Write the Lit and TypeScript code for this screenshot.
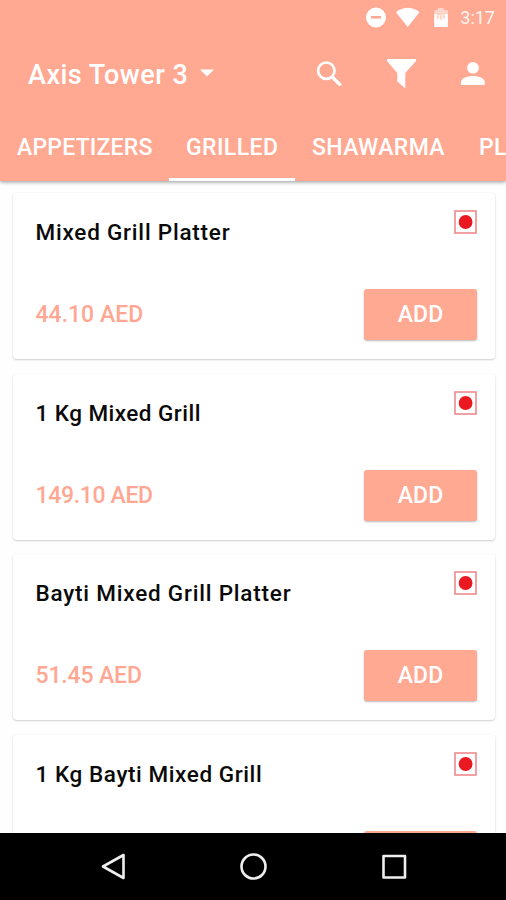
import { LitElement, html, css, svg } from "lit";
import { customElement, property } from "lit/decorators.js";

interface Dish {
  name: string;
  price: string;
  nameSpacing: number;
  priceSpacing: number;
}

const dishes: Dish[] = [
  { name: "Mixed Grill Platter", price: "44.10 AED", nameSpacing: 0.78, priceSpacing: 0 },
  { name: "1 Kg Mixed Grill", price: "149.10 AED", nameSpacing: 0.46, priceSpacing: -0.35 },
  { name: "Bayti Mixed Grill Platter", price: "51.45 AED", nameSpacing: 0.79, priceSpacing: -0.15 },
  { name: "1 Kg Bayti Mixed Grill", price: "51.45 AED", nameSpacing: 0.58, priceSpacing: -0.15 },
];

@customElement("dish-card")
export class DishCard extends LitElement {
  @property({ attribute: false }) dish!: Dish;

  static styles = css`
    :host {
      display: flex;
      flex-direction: column;
      justify-content: space-between;
      box-sizing: border-box;
      height: 166px;
      flex: none;
      padding: 17px 18px 19px 22.5px;
      border-radius: 4px;
      background: #fff;
      box-shadow: 0 1px 2px rgba(0, 0, 0, 0.18), 0 0 2px rgba(0, 0, 0, 0.05);
    }
    .row {
      display: flex;
      justify-content: space-between;
    }
    .name {
      color: #0a0a0a;
      font-size: 22.5px;
      font-weight: 500;
      line-height: 26px;
      margin-top: 9px;
      white-space: nowrap;
    }
    .price {
      color: #ffa792;
      font-size: 23px;
      font-weight: 500;
      line-height: 51px;
      white-space: nowrap;
    }
    .badge {
      width: 23px;
      height: 24px;
    }
    .add {
      width: 113px;
      height: 51px;
      padding: 0;
      border: 0;
      border-radius: 3px;
      background: #ffa892;
      color: #fff;
      font: 500 23px/51px Roboto, "Liberation Sans", sans-serif;
      box-shadow: 0 1px 2px rgba(0, 0, 0, 0.28);
    }
  `;

  render() {
    const { name, price, nameSpacing, priceSpacing } = this.dish;
    return html`
      <div class="row">
        <div class="name" style="letter-spacing:${nameSpacing}px">${name}</div>
        <svg class="badge" viewBox="0 0 23 24">
          <rect x="1" y="1" width="21" height="22" fill="#fff" stroke="#ee8a8c" stroke-width="1.6" />
          <circle cx="11.6" cy="12" r="6.9" fill="#ea1820" />
        </svg>
      </div>
      <div class="row">
        <div class="price" style="letter-spacing:${priceSpacing}px">${price}</div>
        <button class="add">ADD</button>
      </div>
    `;
  }
}

@customElement("app-root")
export class AppRoot extends LitElement {
  static styles = css`
    :host {
      display: flex;
      flex-direction: column;
      width: 506px;
      height: 900px;
      overflow: hidden;
      background: #fefefe;
      color: #fff;
      font-family: Roboto, "Liberation Sans", sans-serif;
    }
    .header {
      flex: none;
      height: 181px;
      background: #ffa892;
      box-shadow: 0 1px 4px rgba(0, 0, 0, 0.42);
      z-index: 1;
      display: flex;
      flex-direction: column;
    }
    .status {
      height: 35px;
      display: flex;
      align-items: center;
      justify-content: flex-end;
      padding-right: 11px;
    }
    .status svg {
      width: 96px;
      height: 35px;
    }
    .clock {
      font-size: 18px;
      line-height: 36px;
      color: #fff4f0;
    }
    .toolbar {
      height: 78px;
      display: flex;
      align-items: center;
      padding-left: 28px;
    }
    .place {
      font-size: 27px;
      font-weight: 500;
      line-height: 78px;
      padding-top: 2px;
      letter-spacing: 0.5px;
      white-space: nowrap;
    }
    .caret {
      width: 14px;
      height: 8px;
      margin: -2px 0 0 12px;
    }
    .actions {
      width: 190px;
      height: 40px;
      margin-left: auto;
      flex: none;
    }
    .tabs {
      height: 68px;
      display: flex;
      overflow: hidden;
    }
    .tab {
      flex: none;
      box-sizing: border-box;
      height: 68px;
      padding: 1px 0 0 17px;
      font-size: 23px;
      font-weight: 500;
      letter-spacing: 0.2px;
      line-height: 68px;
      border-bottom: 3px solid transparent;
      white-space: nowrap;
    }
    .appetizers { width: 169px; }
    .grilled { width: 126px; border-bottom-color: #fff; letter-spacing: 0.4px; }
    .shawarma { width: 167px; letter-spacing: 0.35px; }
    .list {
      flex: 1;
      min-height: 0;
      overflow: hidden;
      padding: 12px 11px 0 13px;
      display: flex;
      flex-direction: column;
      gap: 14.7px;
    }
    .nav {
      flex: none;
      height: 67px;
      background: #000;
    }
    .nav svg {
      display: block;
      width: 506px;
      height: 67px;
    }
  `;

  private statusIcons() {
    return svg`
      <circle cx="12" cy="17.500" r="10" fill="#fff" />
      <rect x="7" y="16" width="10" height="2.600" fill="#ffa892" />
      <path d="M32 12.200C39 6.200 48.500 6.200 55.500 12.200L43.700 27Z" fill="#fff" />
      <path d="M70.300 10h3.500V8h6v2h4V27h-13.500Z" fill="#fff" fill-opacity=".5" />
      <path d="M70.300 14h2.500v5h2v-4h1v5h2v-5h1v4h2v-5h3V27h-13.500Z" fill="#fff" />
    `;
  }

  render() {
    return html`
      <div class="header">
        <div class="status">
          <svg viewBox="0 0 96 35">${this.statusIcons()}</svg>
          <span class="clock">3:17</span>
        </div>
        <div class="toolbar">
          <div class="place">Axis Tower 3</div>
          <svg class="caret" viewBox="0 0 14 8"><path d="M0 .5h14L7 7.500Z" fill="#fff" /></svg>
          <svg class="actions" viewBox="316 54 190 40">
            <circle cx="326.300" cy="70.700" r="8.200" fill="none" stroke="#fff" stroke-width="2.700" />
            <path d="M332 76.700L340.700 85.400" stroke="#fff" stroke-width="3.400" />
            <path d="M387 59h29v2L405.300 73V88.500L397.300 81.500V73L387 61Z" fill="#fff" />
            <circle cx="473" cy="67.800" r="5.900" fill="#fff" />
            <path d="M461 85V82C461 78 468 76 473 76S484.700 78 484.700 82V85Z" fill="#fff" />
          </svg>
        </div>
        <div class="tabs">
          <div class="tab appetizers">APPETIZERS</div>
          <div class="tab grilled">GRILLED</div>
          <div class="tab shawarma">SHAWARMA</div>
          <div class="tab">PL</div>
        </div>
      </div>
      <div class="list">
        ${dishes.map((d) => html`<dish-card .dish=${d}></dish-card>`)}
      </div>
      <div class="nav">
        <svg viewBox="0 833 506 67" fill="none" stroke="#eee" stroke-width="2.600" stroke-linejoin="round">
          <path d="M103 866.500L123.500 855V878Z" />
          <circle cx="253.500" cy="866.500" r="12" />
          <rect x="383.500" y="856" width="21.500" height="21.500" />
        </svg>
      </div>
    `;
  }
}
